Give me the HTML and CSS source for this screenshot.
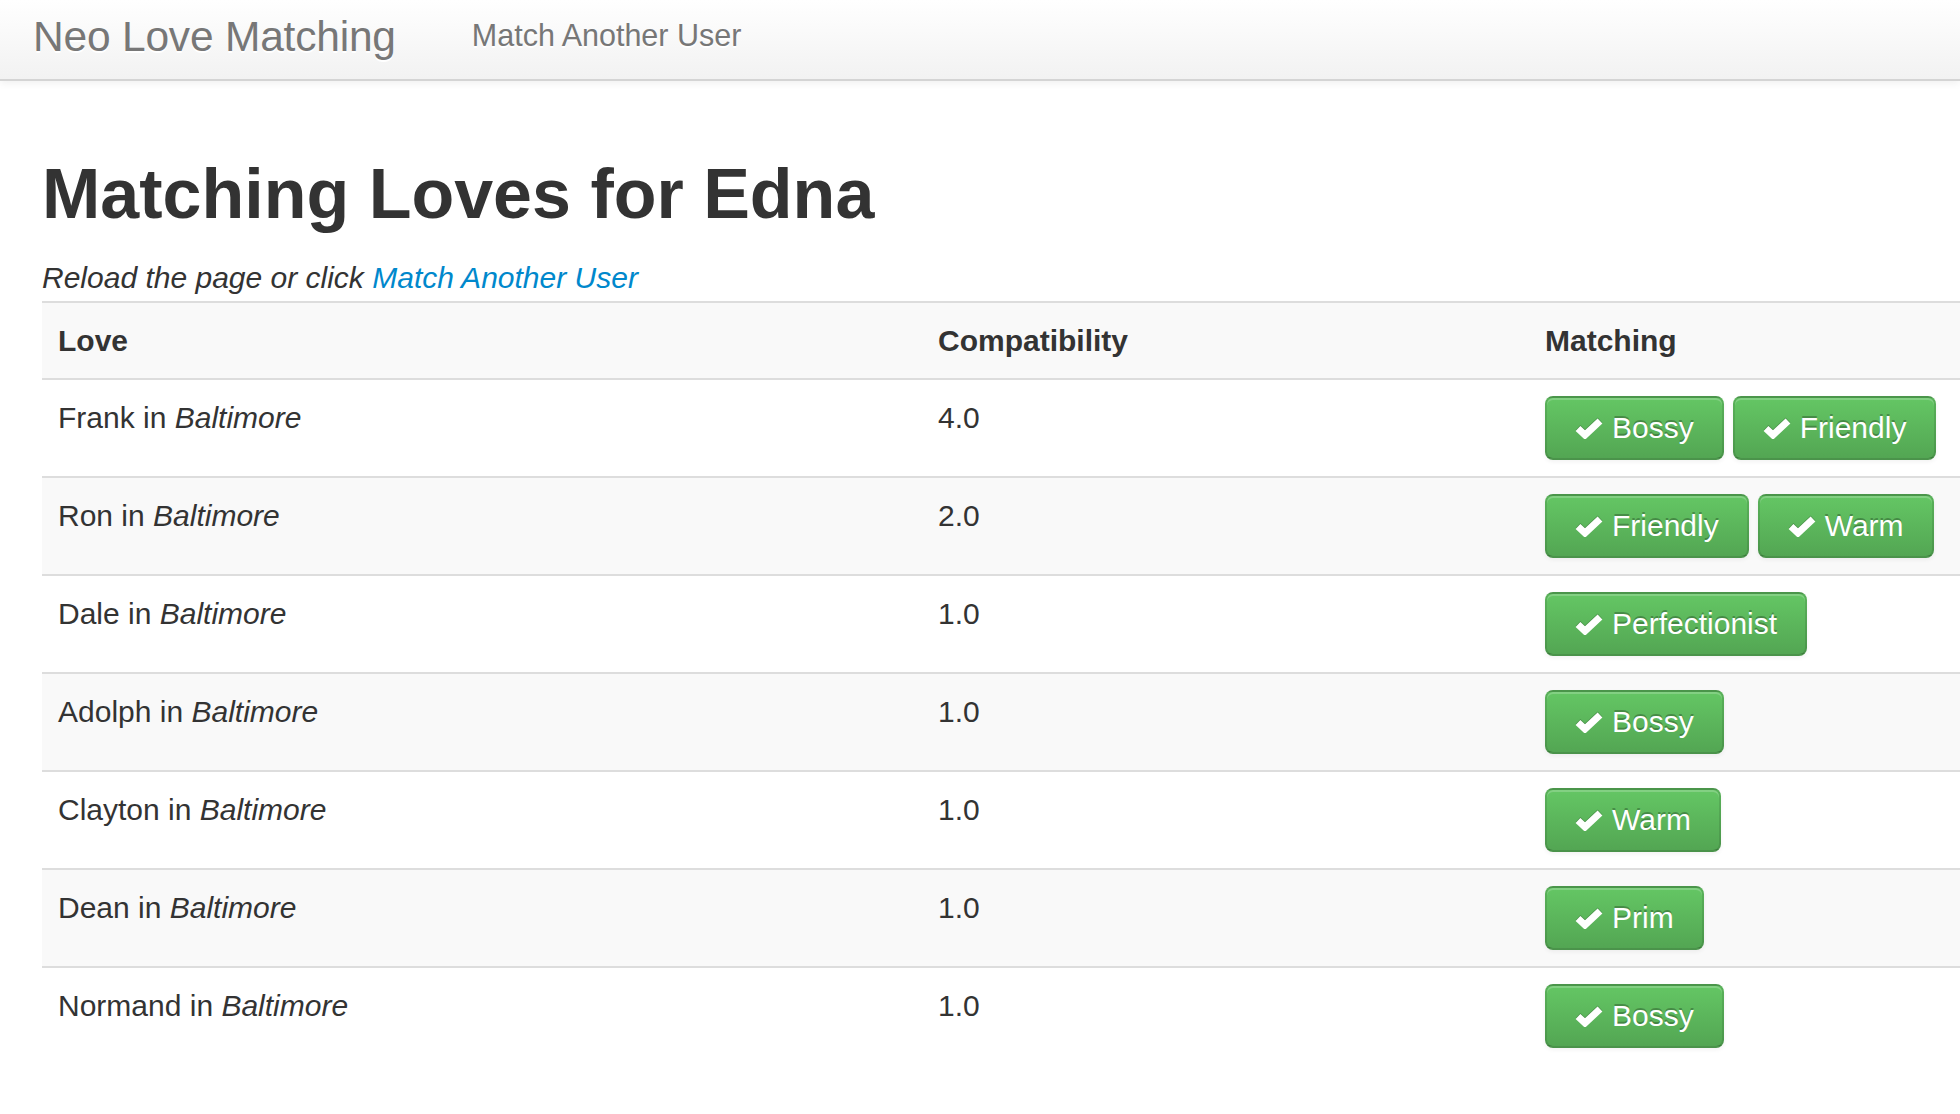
FILE: index.html
```html
<!DOCTYPE html>
<html>
<head>
<meta charset="utf-8">
<title>Neo Love Matching</title>
<link rel="stylesheet" href="styles.css">
</head>
<body>
<div class="navbar">
  <a class="brand" href="#">Neo Love Matching</a>
  <a class="nav-link" href="#">Match Another User</a>
</div>
<div class="container">
  <h1 class="title">Matching Loves for Edna</h1>
  <p class="lead"><em>Reload the page or click <a href="#">Match Another User</a></em></p>
  <table class="table">
    <colgroup><col class="c1"><col class="c2"><col class="c3"></colgroup>
    <tbody>
      <tr class="odd"><th>Love</th><th>Compatibility</th><th>Matching</th></tr>
      <tr><td>Frank in <em>Baltimore</em></td><td>4.0</td><td><div class="btns"><span class="btn"><svg class="ok" viewBox="0 0 28 22"><polyline points="3,11.5 10,18 25,4"/></svg>Bossy</span><span class="btn"><svg class="ok" viewBox="0 0 28 22"><polyline points="3,11.5 10,18 25,4"/></svg>Friendly</span></div></td></tr>
      <tr class="odd"><td>Ron in <em>Baltimore</em></td><td>2.0</td><td><div class="btns"><span class="btn"><svg class="ok" viewBox="0 0 28 22"><polyline points="3,11.5 10,18 25,4"/></svg>Friendly</span><span class="btn"><svg class="ok" viewBox="0 0 28 22"><polyline points="3,11.5 10,18 25,4"/></svg>Warm</span></div></td></tr>
      <tr><td>Dale in <em>Baltimore</em></td><td>1.0</td><td><div class="btns"><span class="btn"><svg class="ok" viewBox="0 0 28 22"><polyline points="3,11.5 10,18 25,4"/></svg>Perfectionist</span></div></td></tr>
      <tr class="odd"><td>Adolph in <em>Baltimore</em></td><td>1.0</td><td><div class="btns"><span class="btn"><svg class="ok" viewBox="0 0 28 22"><polyline points="3,11.5 10,18 25,4"/></svg>Bossy</span></div></td></tr>
      <tr><td>Clayton in <em>Baltimore</em></td><td>1.0</td><td><div class="btns"><span class="btn"><svg class="ok" viewBox="0 0 28 22"><polyline points="3,11.5 10,18 25,4"/></svg>Warm</span></div></td></tr>
      <tr class="odd"><td>Dean in <em>Baltimore</em></td><td>1.0</td><td><div class="btns"><span class="btn"><svg class="ok" viewBox="0 0 28 22"><polyline points="3,11.5 10,18 25,4"/></svg>Prim</span></div></td></tr>
      <tr><td>Normand in <em>Baltimore</em></td><td>1.0</td><td><div class="btns"><span class="btn"><svg class="ok" viewBox="0 0 28 22"><polyline points="3,11.5 10,18 25,4"/></svg>Bossy</span></div></td></tr>
    </tbody>
  </table>
</div>
</body>
</html>
```
FILE: styles.css
```css
html, body {
  margin: 0;
  padding: 0;
  overflow-x: hidden;
}
body {
  font-family: "Liberation Sans", Arial, Helvetica, sans-serif;
  font-size: 30px;
  line-height: 43px;
  color: #333;
  background: #fff;
}
a { color: #0088cc; text-decoration: none; }

.navbar {
  height: 79px;
  display: flex;
  align-items: flex-start;
  background: linear-gradient(to bottom, #ffffff, #f2f2f2);
  border-bottom: 2px solid #d4d4d4;
  box-shadow: 0 2px 8px rgba(0, 0, 0, 0.065);
  position: relative;
  z-index: 2;
}
.brand {
  margin-left: 33px;
  padding-top: 12px;
  font-size: 42.5px;
  line-height: 50px;
  color: #777;
  font-weight: 300;
  text-shadow: 0 2px 0 #fff;
  letter-spacing: -0.2px;
}
.nav-link {
  margin-left: 76px;
  padding-top: 14px;
  font-size: 30.5px;
  line-height: 43px;
  color: #777;
  text-shadow: 0 2px 0 #fff;
}

.container {
  padding-left: 42px;
}
.title {
  margin: 75px 0 0 0;
  font-size: 70px;
  line-height: 77px;
  font-weight: bold;
  color: #333;
}
.lead {
  margin: 23px 0 2px 0;
}

.table {
  width: 100%;
  border-collapse: collapse;
  border-spacing: 0;
  table-layout: fixed;
}
.c1 { width: 880px; }
.c2 { width: 607px; }
.table th, .table td {
  text-align: left;
  vertical-align: top;
  padding: 16px;
  border-top: 2px solid #ddd;
  line-height: 43px;
}
.table th { font-weight: bold; }
.table tr.odd { background: #f9f9f9; }

.btns {
  display: flex;
  gap: 9px;
}
.btn {
  display: inline-flex;
  align-items: center;
  height: 60px;
  box-sizing: content-box;
  padding: 0 28px;
  line-height: 42px;
  color: #fff;
  text-shadow: 0 -2px 0 rgba(0, 0, 0, 0.25);
  background: linear-gradient(to bottom, #64c664, #53a653);
  border: 2px solid;
  border-color: rgba(0, 0, 0, 0.1) rgba(0, 0, 0, 0.1) rgba(0, 0, 0, 0.25);
  border-radius: 8px;
  box-shadow: inset 0 2px 0 rgba(255, 255, 255, 0.2), 0 2px 4px rgba(0, 0, 0, 0.05);
}
.ok {
  width: 28px;
  height: 22px;
  margin-right: 9px;
  margin-top: -1px;
  filter: drop-shadow(0 -1px 0 rgba(0, 0, 0, 0.2));
}
.ok polyline {
  fill: none;
  stroke: #fff;
  stroke-width: 7;
  stroke-linecap: butt;
  stroke-linejoin: miter;
}
```
